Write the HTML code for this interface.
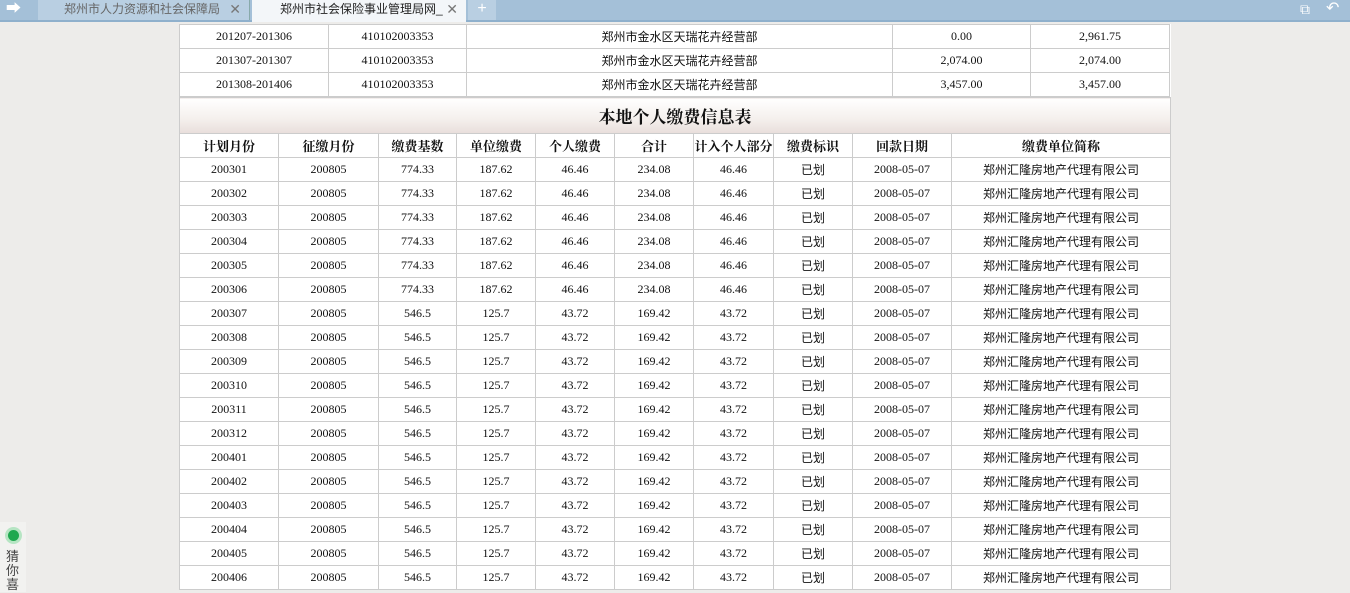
<!DOCTYPE html><html><head><meta charset="utf-8"><style>
body{margin:0;width:1350px;height:587px;overflow:hidden;background:#edecea;font-family:"Liberation Serif","Noto Serif CJK SC",serif;position:relative}
.bar{position:absolute;left:0;top:0;width:1350px;height:20px;background:#a4c0d8;border-bottom:2px solid #8fb0cc}
.tab{position:absolute;top:0;height:20px;font:12px "Liberation Sans","Noto Sans CJK SC",sans-serif;line-height:18px;color:#666;white-space:nowrap;overflow:hidden;box-sizing:border-box}
.t1{left:38px;width:212px;background:#b9cfe2;border-right:1px solid #8aa;padding-left:26px}
.t2{left:252px;width:214px;background:#f3f6f9;color:#222;height:22px;padding-left:28px}
.t3{left:468px;width:28px;background:#b9cfe2;text-align:center;color:#fff;font-size:16px}
.x{position:absolute;right:8px;top:0;font-size:14px;color:#777}
.wrap{position:absolute;left:179px;top:24px;width:992px;background:#fff}
table{border-collapse:collapse;table-layout:fixed;width:991px;font-size:12px;color:#111}
td{border:1px solid #ccc;text-align:center;height:23px;padding:0;white-space:nowrap;overflow:hidden}
.title td{height:35px;font-size:17px;font-weight:bold;background:linear-gradient(#fff,#f4efec 60%,#e8dedb);font-family:"Noto Serif CJK SC",serif}
.hd td{font-weight:bold;font-size:13px;font-family:"Noto Serif CJK SC",serif}
.cn{font-family:"Noto Sans CJK SC",sans-serif;font-size:12px}
</style></head><body>
<div class="bar"></div>
<div class="tab" style="left:6px;color:#fff;font-size:15px">➡</div>
<div class="tab t1">郑州市人力资源和社会保障局<span class="x">✕</span></div>
<div class="tab t2">郑州市社会保险事业管理局网_<span class="x">✕</span></div>
<div class="tab t3">+</div>
<div class="tab" style="left:1300px;color:#fff;font-size:14px">⧉</div><div class="tab" style="left:1326px;color:#fff;font-size:16px">↶</div>
<div style="position:absolute;left:0;top:522px;width:26px;height:70px;background:#f2f2f0"><div style="margin:8px 8px;width:11px;height:11px;border-radius:50%;background:#1fa84f;box-shadow:0 0 0 3px #b6e5c3"></div><div style="font:13px 'Noto Sans CJK SC';color:#444;width:14px;margin-left:6px;line-height:14px">猜你喜</div></div>
<div class="wrap"><table>
<colgroup><col style="width:149px"><col style="width:138px"><col style="width:426px"><col style="width:138px"><col style="width:139px"></colgroup>
<tr><td>201207-201306</td><td>410102003353</td><td class="cn">郑州市金水区天瑞花卉经营部</td><td>0.00</td><td>2,961.75</td></tr>
<tr><td>201307-201307</td><td>410102003353</td><td class="cn">郑州市金水区天瑞花卉经营部</td><td>2,074.00</td><td>2,074.00</td></tr>
<tr><td>201308-201406</td><td>410102003353</td><td class="cn">郑州市金水区天瑞花卉经营部</td><td>3,457.00</td><td>3,457.00</td></tr>
</table>
<table>
<colgroup><col style="width:99px"><col style="width:100px"><col style="width:78px"><col style="width:79px"><col style="width:79px"><col style="width:79px"><col style="width:80px"><col style="width:79px"><col style="width:99px"><col style="width:219px"></colgroup>
<tr class="title"><td colspan="10">本地个人缴费信息表</td></tr>
<tr class="hd"><td>计划月份</td><td>征缴月份</td><td>缴费基数</td><td>单位缴费</td><td>个人缴费</td><td>合计</td><td>计入个人部分</td><td>缴费标识</td><td>回款日期</td><td>缴费单位简称</td></tr>
<tr><td>200301</td><td>200805</td><td>774.33</td><td>187.62</td><td>46.46</td><td>234.08</td><td>46.46</td><td class="cn">已划</td><td>2008-05-07</td><td class="cn">郑州汇隆房地产代理有限公司</td></tr>
<tr><td>200302</td><td>200805</td><td>774.33</td><td>187.62</td><td>46.46</td><td>234.08</td><td>46.46</td><td class="cn">已划</td><td>2008-05-07</td><td class="cn">郑州汇隆房地产代理有限公司</td></tr>
<tr><td>200303</td><td>200805</td><td>774.33</td><td>187.62</td><td>46.46</td><td>234.08</td><td>46.46</td><td class="cn">已划</td><td>2008-05-07</td><td class="cn">郑州汇隆房地产代理有限公司</td></tr>
<tr><td>200304</td><td>200805</td><td>774.33</td><td>187.62</td><td>46.46</td><td>234.08</td><td>46.46</td><td class="cn">已划</td><td>2008-05-07</td><td class="cn">郑州汇隆房地产代理有限公司</td></tr>
<tr><td>200305</td><td>200805</td><td>774.33</td><td>187.62</td><td>46.46</td><td>234.08</td><td>46.46</td><td class="cn">已划</td><td>2008-05-07</td><td class="cn">郑州汇隆房地产代理有限公司</td></tr>
<tr><td>200306</td><td>200805</td><td>774.33</td><td>187.62</td><td>46.46</td><td>234.08</td><td>46.46</td><td class="cn">已划</td><td>2008-05-07</td><td class="cn">郑州汇隆房地产代理有限公司</td></tr>
<tr><td>200307</td><td>200805</td><td>546.5</td><td>125.7</td><td>43.72</td><td>169.42</td><td>43.72</td><td class="cn">已划</td><td>2008-05-07</td><td class="cn">郑州汇隆房地产代理有限公司</td></tr>
<tr><td>200308</td><td>200805</td><td>546.5</td><td>125.7</td><td>43.72</td><td>169.42</td><td>43.72</td><td class="cn">已划</td><td>2008-05-07</td><td class="cn">郑州汇隆房地产代理有限公司</td></tr>
<tr><td>200309</td><td>200805</td><td>546.5</td><td>125.7</td><td>43.72</td><td>169.42</td><td>43.72</td><td class="cn">已划</td><td>2008-05-07</td><td class="cn">郑州汇隆房地产代理有限公司</td></tr>
<tr><td>200310</td><td>200805</td><td>546.5</td><td>125.7</td><td>43.72</td><td>169.42</td><td>43.72</td><td class="cn">已划</td><td>2008-05-07</td><td class="cn">郑州汇隆房地产代理有限公司</td></tr>
<tr><td>200311</td><td>200805</td><td>546.5</td><td>125.7</td><td>43.72</td><td>169.42</td><td>43.72</td><td class="cn">已划</td><td>2008-05-07</td><td class="cn">郑州汇隆房地产代理有限公司</td></tr>
<tr><td>200312</td><td>200805</td><td>546.5</td><td>125.7</td><td>43.72</td><td>169.42</td><td>43.72</td><td class="cn">已划</td><td>2008-05-07</td><td class="cn">郑州汇隆房地产代理有限公司</td></tr>
<tr><td>200401</td><td>200805</td><td>546.5</td><td>125.7</td><td>43.72</td><td>169.42</td><td>43.72</td><td class="cn">已划</td><td>2008-05-07</td><td class="cn">郑州汇隆房地产代理有限公司</td></tr>
<tr><td>200402</td><td>200805</td><td>546.5</td><td>125.7</td><td>43.72</td><td>169.42</td><td>43.72</td><td class="cn">已划</td><td>2008-05-07</td><td class="cn">郑州汇隆房地产代理有限公司</td></tr>
<tr><td>200403</td><td>200805</td><td>546.5</td><td>125.7</td><td>43.72</td><td>169.42</td><td>43.72</td><td class="cn">已划</td><td>2008-05-07</td><td class="cn">郑州汇隆房地产代理有限公司</td></tr>
<tr><td>200404</td><td>200805</td><td>546.5</td><td>125.7</td><td>43.72</td><td>169.42</td><td>43.72</td><td class="cn">已划</td><td>2008-05-07</td><td class="cn">郑州汇隆房地产代理有限公司</td></tr>
<tr><td>200405</td><td>200805</td><td>546.5</td><td>125.7</td><td>43.72</td><td>169.42</td><td>43.72</td><td class="cn">已划</td><td>2008-05-07</td><td class="cn">郑州汇隆房地产代理有限公司</td></tr>
<tr><td>200406</td><td>200805</td><td>546.5</td><td>125.7</td><td>43.72</td><td>169.42</td><td>43.72</td><td class="cn">已划</td><td>2008-05-07</td><td class="cn">郑州汇隆房地产代理有限公司</td></tr>
</table></div>
</body></html>
